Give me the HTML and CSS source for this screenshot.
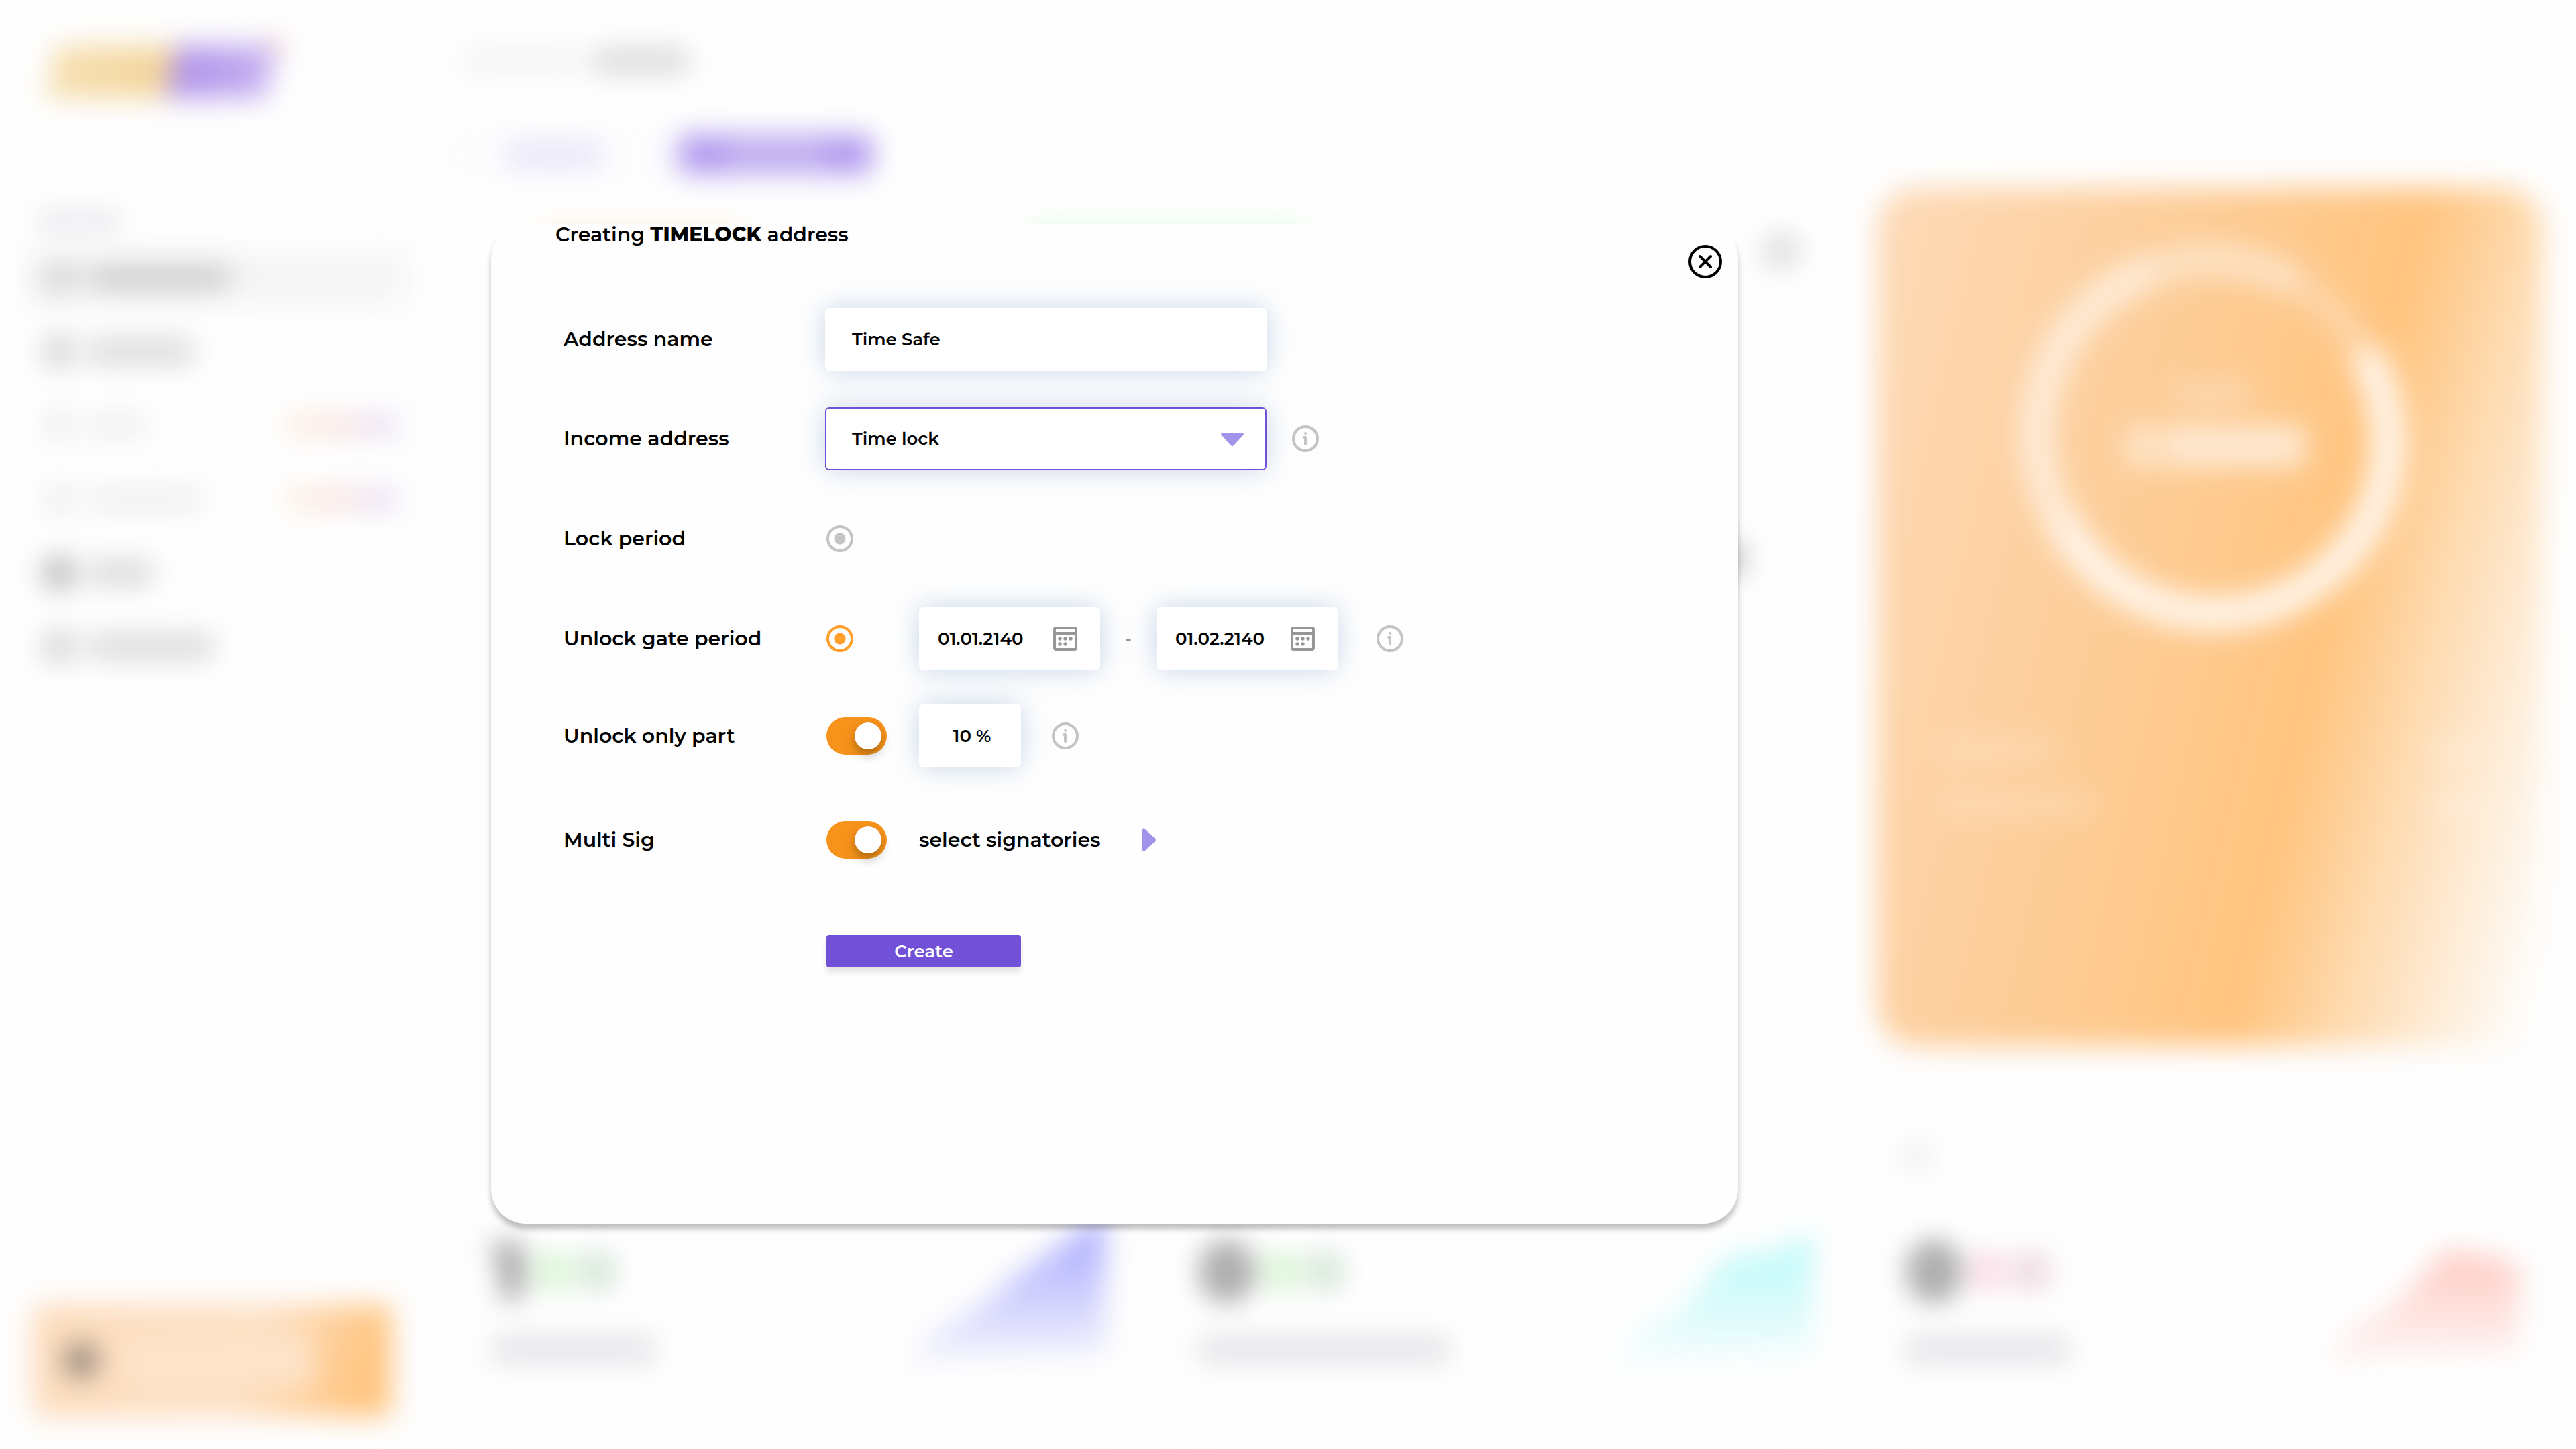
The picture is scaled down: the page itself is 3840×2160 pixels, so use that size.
FILE: index.html
```html
<!DOCTYPE html>
<html lang="en">
<head>
<meta charset="utf-8">
<title>Creating TIMELOCK address</title>
<link rel="stylesheet" href="styles.css">
</head>
<body>
<div class="page" aria-hidden="true">
  <aside class="side">
    <div class="logo"><i class="logo-a"></i><i class="logo-b"></i><i class="logo-tip"></i></div>
    <div class="side-title"></div>
    <div class="nav">
      <div class="nav-item active"><i class="ico"></i><i class="bar w210"></i></div>
      <div class="nav-item"><i class="ico"></i><i class="bar w155"></i></div>
      <div class="nav-item faint"><i class="ico"></i><i class="bar w85"></i><i class="badge"></i></div>
      <div class="nav-item faint"><i class="ico"></i><i class="bar w170"></i><i class="badge"></i></div>
      <div class="nav-item"><i class="ico strong"></i><i class="bar w95"></i></div>
      <div class="nav-item"><i class="ico"></i><i class="bar w185"></i></div>
    </div>
    <div class="promo"><i class="promo-ico"></i><i class="promo-text"></i></div>
  </aside>
  <div class="main">
    <div class="content">
      <div class="crumbs"><i class="crumb"></i><i class="crumb here"></i></div>
      <div class="tabs"><div class="tab"><i></i></div><div class="tab on"><i></i></div></div>
      <div class="tiles"><i class="tile orange"></i><i class="tile green"></i><i class="more"></i></div>
      <i class="value"></i>
    </div>
    <div class="hero">
      <svg class="ring" viewBox="0 0 600 600" fill="none" stroke-width="50">
        <path d="M300 42A258 258 0 0 1 429 77" stroke="#fde2c4"/>
        <path d="M429 77A258 258 0 0 1 528 179" stroke="#fed8b0" stroke-width="36"/>
        <path d="M528 179A258 258 0 1 1 79 433" stroke="#fff6ec"/>
        <path d="M79 433A258 258 0 0 1 212 58" stroke="#feecd9"/>
        <path d="M212 58A258 258 0 0 1 300 42" stroke="#fde2c4"/>
        <rect x="244" y="222" width="118" height="36" fill="#fdd9b2"/>
        <path d="M178 288H216V350H178ZM228 288H442V350H228Z" fill="#fee9d2"/>
      </svg>
      <div class="line"><i class="w165"></i><i class="w70"></i></div>
      <div class="line"><i class="w225"></i><i class="w70"></i></div>
    </div>
    <div class="card">
      <i class="dot"></i>
      <div class="stat">
        <div><div class="num"><b>1</b><i class="up"></i><i class="pct"></i></div><i class="cap w240"></i></div>
        <svg class="chart" viewBox="0 0 300 230"><defs><linearGradient id="g1" x2="0" y2="1"><stop stop-color="#a0a0ff"/><stop offset="1" stop-color="#a0a0ff" stop-opacity="0"/></linearGradient></defs><path d="M0 225L40 160L110 120L170 70L230 30L300 -20V190L60 195Z" fill="url(#g1)"/></svg>
      </div>
    </div>
    <div class="card">
      <i class="dot"></i>
      <div class="stat">
        <div><div class="num"><b>0</b><i class="up"></i><i class="pct"></i></div><i class="cap w370"></i></div>
        <svg class="chart" viewBox="0 0 300 230"><defs><linearGradient id="g2" x2="0" y2="1"><stop stop-color="#b5f8f8"/><stop offset="1" stop-color="#b5f8f8" stop-opacity="0"/></linearGradient></defs><path d="M0 225L40 160L110 120L160 60L190 40L240 40L300 10V190L60 195Z" fill="url(#g2)"/></svg>
      </div>
    </div>
    <div class="card">
      <i class="dot seen"></i>
      <div class="stat">
        <div><div class="num"><b>0</b><i class="up red"></i><i class="pct red"></i></div><i class="cap w240"></i></div>
        <svg class="chart" viewBox="0 0 300 230"><defs><linearGradient id="g3" x2="0" y2="1"><stop stop-color="#ffc8c0"/><stop offset="1" stop-color="#ffc8c0" stop-opacity="0"/></linearGradient></defs><path d="M0 225L40 160L110 120L160 70L190 35L240 40L300 55V190L60 195Z" fill="url(#g3)"/></svg>
      </div>
    </div>
  </div>
</div>

<svg class="sprite" aria-hidden="true">
  <symbol id="info" viewBox="0 0 40 40"><circle cx="20" cy="20" r="18" fill="none" stroke="#c4c4c4" stroke-width="4"/><circle cx="20" cy="12" r="2" fill="#c4c4c4"/><path d="M18 18h2v10" fill="none" stroke="#c4c4c4" stroke-width="4" stroke-linecap="round" stroke-linejoin="round"/></symbol>
  <symbol id="calendar" viewBox="0 0 36 36"><path d="M4 0H32a4 4 0 0 1 4 4V32a4 4 0 0 1-4 4H4a4 4 0 0 1-4-4V4a4 4 0 0 1 4-4ZM4 4V8H32V4ZM4 12V32H32V12Z" fill="#979797" fill-rule="evenodd"/><g fill="#979797"><circle cx="10" cy="18" r="2.700"/><circle cx="18" cy="18" r="2.700"/><circle cx="26" cy="18" r="2.700"/><circle cx="10" cy="26" r="2.700"/><circle cx="18" cy="26" r="2.700"/></g></symbol>
</svg>

<section class="modal" role="dialog" aria-labelledby="title">
  <header class="modal-head">
    <h1 id="title">Creating <strong>TIMELOCK</strong> address</h1>
    <button class="close" type="button" aria-label="Close"><svg viewBox="0 0 50 50" fill="none" stroke="#000" stroke-width="4" stroke-linecap="round"><circle cx="25" cy="25" r="23"/><path d="M17 17L33 33M33 17L17 33"/></svg></button>
  </header>
  <form class="form">
    <label for="name">Address name</label>
    <div class="field"><input class="box wide" id="name" type="text" value="Time Safe"></div>

    <label for="income">Income address</label>
    <div class="field near">
      <div class="select"><select class="box wide" id="income"><option>Time lock</option></select><svg class="arrow" viewBox="0 0 34 20"><path d="M2 0H32Q35 1 33 4L19 19Q17 21 15 19L1 4Q-1 1 2 0Z" fill="#9f94ea"/></svg></div>
      <svg class="info"><use href="#info"/></svg>
    </div>

    <label for="lock">Lock period</label>
    <div class="field"><div class="slot"><input class="radio" id="lock" name="period" type="radio"></div></div>

    <label for="gate">Unlock gate period</label>
    <div class="field">
      <div class="slot"><input class="radio" id="gate" name="period" type="radio" checked></div>
      <div class="range">
        <div class="box date"><input type="text" aria-label="From" value="01.01.2140"><svg><use href="#calendar"/></svg></div>
        <span class="dash">-</span>
        <div class="box date"><input type="text" aria-label="To" value="01.02.2140"><svg><use href="#calendar"/></svg></div>
      </div>
      <svg class="info"><use href="#info"/></svg>
    </div>

    <label for="part">Unlock only part</label>
    <div class="field">
      <div class="slot"><input class="toggle" id="part" type="checkbox" checked></div>
      <div class="part">
        <input class="box percent" type="text" aria-label="Part to unlock" value="10 %">
        <svg class="info"><use href="#info"/></svg>
      </div>
    </div>

    <label for="multi">Multi Sig</label>
    <div class="field">
      <div class="slot"><input class="toggle" id="multi" type="checkbox" checked></div>
      <button class="pick" type="button">select signatories<svg viewBox="0 0 20 34"><path d="M0 2Q1-1 4 1L19 15Q21 17 19 19L4 33Q1 35 0 32Z" fill="#9f94ea"/></svg></button>
    </div>

    <div class="field submit"><button class="create" type="submit">Create</button></div>
  </form>
</section>
</body>
</html>
```
FILE: styles.css
```css
* { box-sizing: border-box; }
body {
  margin: 0;
  min-height: 100vh;
  position: relative;
  overflow-x: hidden;
  background: #fefefe;
  color: #000;
  font: 600 30px/40px Montserrat, Inter, sans-serif;
}
.sprite { display: none; }

/* Dimmed dashboard behind the dialog */
.page { display: flex; min-height: 100vh; filter: blur(20px); overflow: hidden; }
.page i { display: block; flex: none; }
.side {
  width: 640px;
  flex: none;
  display: flex;
  flex-direction: column;
  padding: 68px 30px 48px 40px;
  border-right: 6px solid #fafafa;
}
.logo { display: flex; padding-left: 36px; height: 78px; }
.logo-a, .logo-b { height: 78px; transform: skewX(-12deg); }
.logo-a { width: 180px; background: linear-gradient(90deg, #f6dfb0, #f3d49a); }
.logo-b { width: 148px; background: linear-gradient(90deg, #ae90ea, #c6b0f0); }
.logo-tip { width: 20px; height: 20px; margin: -12px 0 0 -2px; background: #f8c0b0; }
.side-title { width: 125px; height: 28px; margin: 170px 0 0 15px; background: #e8e8ee; }
.nav { display: flex; flex-direction: column; gap: 30px; margin-top: 30px; }
.nav-item { display: flex; align-items: center; gap: 22px; height: 80px; padding: 0 14px 0 26px; }
.nav-item.active { background: #f5f5f5; }
.ico { width: 44px; height: 44px; border-radius: 8px; background: #d2d2d2; }
.ico.strong { background: #b4b4b4; }
.bar { height: 34px; background: #d6d6d6; }
.nav-item.active .bar { background: #cacaca; }
.faint .ico, .faint .bar { background: #efefef; }
.badge { width: 160px; height: 30px; margin-left: auto; background: linear-gradient(90deg, #fdebd8, #fae3e0 50%, #e2d8fa); }
.promo {
  display: flex;
  align-items: center;
  gap: 40px;
  height: 168px;
  width: 536px;
  margin-top: auto;
  margin-left: 8px;
  padding-left: 48px;
  border-radius: 12px;
  background: linear-gradient(110deg, #fddcbc, #fddfc2 60%, #ffc580 90%);
}
.promo-ico { width: 50px; height: 50px; border-radius: 50%; background: #8d8178; }
.promo-text { width: 280px; height: 80px; background: #fee4ca; }
.main {
  flex: 1;
  display: grid;
  grid-template-columns: repeat(3, 1fr);
  grid-template-rows: auto 540px;
  gap: 30px 60px;
  padding: 0 48px 30px 50px;
}
.content { grid-column: span 2; padding-top: 74px; }
.crumbs { display: flex; gap: 20px; }
.crumb { width: 175px; height: 34px; background: #f3f3f3; }
.crumb.here { width: 140px; background: #d6d6d6; }
.tabs { display: flex; gap: 20px; margin: 94px 0 0 -10px; }
.tab { display: flex; align-items: center; justify-content: center; width: 312px; height: 56px; padding-right: 20px; border: 4px solid #f0ecfc; }
.tab i { width: 140px; height: 32px; background: #e6e0f8; }
.tab.on { width: 288px; padding: 0; border: 0; background: #ae96ee; }
.tab.on i { background: #c3b3ef; }
.tiles { display: flex; height: 60px; gap: 430px; padding-left: 115px; margin-top: 82px; }
.tile { width: 300px; }
.tile.orange { background: #fff0dc; }
.tile.green { width: 410px; background: #dcfbdc; }
.more { width: 52px; height: 52px; margin: 8px 0 0 254px; border-radius: 50%; background: #dadada; }
.value { width: 44px; height: 44px; margin: 410px 0 0 1864px; background: #b8b8b8; }
.hero {
  margin-top: 280px;
  height: 1280px;
  border-radius: 60px;
  padding: 66px 100px 0;
  background: linear-gradient(103deg, #fddab8, #fdce9a 35%, #ffc47f 64%, #fedcb3 77%, #fefefe 98%);
}
.ring { display: block; width: 600px; height: 600px; margin: 0 auto 156px; }
.line { display: flex; justify-content: space-between; height: 34px; margin-bottom: 46px; opacity: .22; }
.line i { background: #fff; }
.card { display: flex; flex-direction: column; padding: 114px 38px 40px 45px; border-radius: 40px; box-shadow: 0 0 30px #fafafa; }
.dot { width: 30px; height: 40px; }
.dot.seen { background: #ebebeb; }
.stat { display: flex; justify-content: space-between; margin-top: 86px; }
.num { display: flex; align-items: center; gap: 20px; height: 130px; }
.num b { font-size: 116px; font-weight: 900; line-height: 130px; color: #8c8c8c; }
.up { width: 40px; height: 50px; background: #ccf4c6; }
.pct { width: 50px; height: 50px; background: #cfe3d2; }
.up.red { background: #fbd0dd; }
.pct.red { background: #ebd4da; }
.cap { height: 36px; margin-top: 34px; background: #e1e1e6; }
.chart { width: 300px; height: 230px; overflow: visible; }
.w70 { width: 70px; } .w85 { width: 85px; } .w95 { width: 95px; } .w155 { width: 155px; }
.w165 { width: 165px; } .w170 { width: 170px; } .w185 { width: 185px; } .w210 { width: 210px; }
.w225 { width: 225px; } .w240 { width: 240px; } .w370 { width: 370px; }

/* Dialog */
.modal {
  position: absolute;
  top: 334px;
  left: 19.0625vw;
  width: 48.4vw;
  min-height: 1490px;
  border-radius: 52px;
  background: #fefefe;
  box-shadow: 0 8px 8px rgba(0, 0, 0, .25);
}
.modal-head { display: flex; justify-content: space-between; height: 98px; padding-left: 96px; padding-right: 24px; }
h1 { margin: 0; font-size: 30px; line-height: 32px; font-weight: 600; }
h1 strong { font-weight: 800; }
button { border: 0; padding: 0; background: none; color: inherit; font: inherit; cursor: pointer; }
.close { width: 50px; height: 50px; margin-top: 31px; }
.close svg { display: block; }
.form {
  display: grid;
  grid-template-columns: 390px 1fr;
  grid-template-rows: 148px 148px 150px 148px 142px 168px 164px;
  align-items: center;
  padding-left: 108px;
}
.field { display: flex; align-items: center; gap: 58px; }
.field.near { gap: 38px; }
.slot { width: 140px; margin-right: -58px; padding-left: 2px; display: flex; }
.part { display: flex; align-items: center; gap: 46px; }
.submit { grid-column: 2; padding-left: 2px; }
.box {
  height: 94px;
  border: 0;
  border-radius: 6px;
  background: #fff;
  box-shadow: 0 0 40px rgba(100, 140, 195, .35);
  color: #000;
  font: 600 26px/32px Montserrat, Inter, sans-serif;
}
.wide { width: 658px; padding: 0 40px; }
.select { position: relative; display: flex; }
.select select { appearance: none; padding: 0 38px; border: 2px solid #7251d9; }
.arrow { position: absolute; right: 34px; top: 38px; width: 34px; height: 20px; pointer-events: none; }
.info { width: 40px; height: 40px; flex: none; }
.radio {
  appearance: none;
  width: 40px;
  height: 40px;
  margin: 0;
  border: 4px solid currentColor;
  border-radius: 50%;
  color: #c4c4c4;
  background: radial-gradient(circle, currentColor 8px, transparent 9px);
}
.radio:checked { color: #ff9e2a; }
.range { display: flex; align-items: center; }
.date { display: flex; align-items: center; justify-content: space-between; width: 270px; padding: 0 34px 0 28px; }
.date input { width: 160px; padding: 0; border: 0; background: none; color: inherit; font: inherit; }
.date svg { width: 36px; height: 36px; flex: none; }
.dash { width: 84px; text-align: center; color: #979797; font-size: 26px; }
.percent { width: 152px; padding: 0 0 0 6px; text-align: center; }
.toggle {
  appearance: none;
  display: flex;
  align-items: center;
  justify-content: flex-end;
  width: 90px;
  height: 56px;
  margin: 0;
  padding-right: 8px;
  border-radius: 28px;
  background: #f7931a;
}
.toggle::before { content: ""; width: 40px; height: 40px; border-radius: 50%; background: #fff; box-shadow: 0 8px 16px rgba(0, 0, 0, .3); }
.toggle:not(:checked) { justify-content: flex-start; padding-left: 8px; background: #c4c4c4; }
.pick { display: flex; align-items: center; gap: 62px; }
.pick svg { width: 20px; height: 34px; }
.create { width: 290px; height: 48px; border-radius: 4px; background: #7251d9; color: #fff; font-size: 26px; box-shadow: 0 8px 8px rgba(0, 0, 0, .1); }
```
